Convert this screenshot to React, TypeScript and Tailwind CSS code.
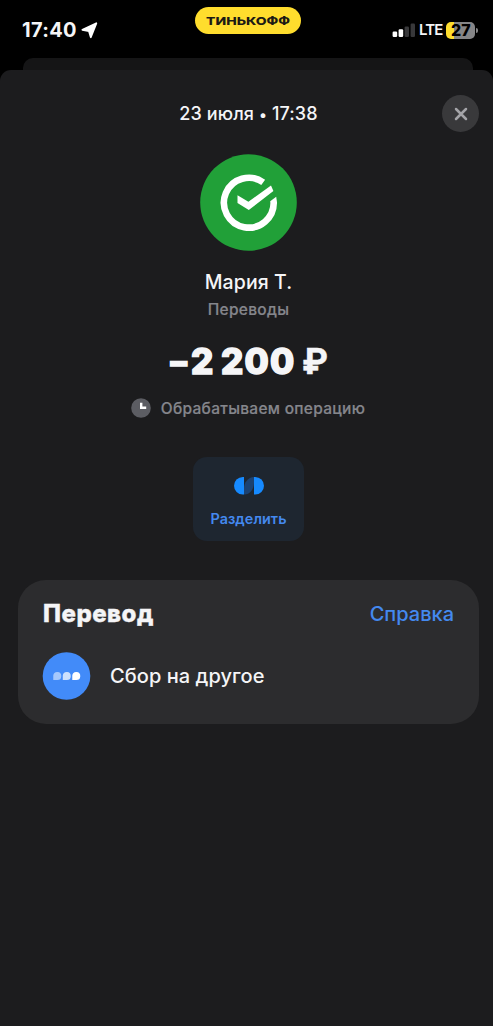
import React from "react";

function StatusBar() {
  return (
    <header className="grid h-[58px] shrink-0 grid-cols-[195px_106px_1fr] items-start">
      <div className="flex h-[60px] items-center pl-[22px]">
        <span className="text-[20px] leading-6 font-bold tracking-[0.3px]">17:40</span>
        <svg className="ml-[4px]" width="17" height="17" viewBox="0 0 17 17" fill="#fff" stroke="#fff" strokeWidth="1.8" strokeLinejoin="round">
          <path d="M15.3 1.3 9.8 15.2 8 9.2 1.4 7.8Z" />
        </svg>
      </div>
      <div className="mt-[7px] flex h-[27px] items-center justify-center rounded-full bg-[#ffdd2d]">
        <svg width="84" height="14" viewBox="0 0 84 14" className="overflow-visible">
          <text x="0" y="10.8" textLength="84" lengthAdjust="spacingAndGlyphs" fontSize="11" fontWeight="800" fill="#1c1a14" fontFamily="Inter, sans-serif">ТИНЬКОФФ</text>
        </svg>
      </div>
      <div className="flex h-[60px] items-center pl-[91px]">
        <svg className="shrink-0" width="24" height="15" viewBox="0 0 24 15">
          <rect x="0.6" y="8.5" width="4.6" height="5.5" rx="1.2" fill="#fff" />
          <rect x="6.6" y="6.3" width="4.6" height="7.7" rx="1.2" fill="#fff" />
          <rect x="12.6" y="3.5" width="4.4" height="10.5" rx="1.2" fill="#38383a" />
          <rect x="18.6" y="0.5" width="4.4" height="13.5" rx="1.2" fill="#38383a" />
        </svg>
        <span className="ml-[3px] text-[15px] leading-5 font-semibold tracking-[-0.9px]">LTE</span>
        <span className="ml-[4px] flex h-[17px] w-[29px] shrink-0 items-center justify-center rounded-[5px] bg-linear-to-r from-[#ffdd2d] from-27% to-[#858587] to-27% text-[16px] font-extrabold text-black">
          27
        </span>
        <span className="ml-px h-[5px] w-[2px] shrink-0 rounded-r bg-[#858587]" />
      </div>
    </header>
  );
}

function BankLogo() {
  return (
    <svg className="mt-[21px] shrink-0" width="97" height="97" viewBox="0 0 97 97">
      <circle cx="48.5" cy="48.5" r="48.3" fill="#21a038" />
      <path d="M63.2 28.4A24.9 24.9 0 1 0 73.7 48" fill="none" stroke="#fff" strokeWidth="6.6" />
      <path d="M70.2 47.2 76.2 42.8 77 48.2H70.4Z" fill="#fff" />
      <path d="M37.5 41.3 48.4 47.8 71 31.4 73.4 37 48.8 56 37.5 48.9Z" fill="#fff" />
    </svg>
  );
}

function SplitButton() {
  return (
    <button className="mt-[36px] flex h-[84px] w-[111px] shrink-0 flex-col items-center rounded-[14px] bg-[#1e2630]">
      <svg className="mt-[20px]" width="30" height="18" viewBox="0 0 30 18">
        <path d="M10 0v17.6H8.8A8.8 8.8 0 0 1 8.8 0Z" fill="#168aff" />
        <path d="M20 0v17.6H21.2A8.8 8.8 0 0 0 21.2 0Z" fill="#168aff" />
        <path d="M10 17.6V11C10 6 14 0 20 0V6C20 12 16 17.6 10 17.6Z" fill="#1c4272" />
      </svg>
      <span className="mt-[14px] text-[14.4px] leading-5 font-semibold tracking-[0.05px] text-[#4489ef]">Разделить</span>
    </button>
  );
}

function TransferCard() {
  return (
    <section className="mt-[39px] h-[144px] w-[461px] shrink-0 rounded-[28px] bg-[#2c2c2e] pt-[19px] pr-[25px] pl-[25px]">
      <div className="flex h-[30px] items-center justify-between">
        <h2 className="text-[24px] leading-[30px] font-extrabold tracking-[0.5px] [-webkit-text-stroke:0.4px_#f5f5f7]">Перевод</h2>
        <a className="text-[20px] leading-[30px] font-medium text-[#4489ef]">Справка</a>
      </div>
      <div className="mt-[23px] -ml-px flex h-[48px] items-center">
        <svg width="49" height="48" viewBox="0 0 49 49">
          <circle cx="24.5" cy="24.5" r="24.3" fill="#428bf9" />
          <path d="M11 28.6V24a4.1 4.1 0 1 1 4.1 4.6Z" fill="#a5c8fc" />
          <path d="M20.7 28.6V24a4.1 4.1 0 1 1 4.1 4.6Z" fill="#cce0fd" />
          <path d="M30.4 28.6V24a4.1 4.1 0 1 1 4.1 4.6Z" fill="#fff" />
        </svg>
        <span className="ml-[19px] text-[20px] leading-7 font-medium tracking-[0.06px]">Сбор на другое</span>
      </div>
    </section>
  );
}

export default function App() {
  return (
    <div className="flex h-[1026px] w-[493px] flex-col overflow-hidden bg-black font-['Inter','Liberation_Sans',sans-serif] whitespace-nowrap text-[#f5f5f7]">
      <StatusBar />
      <div className="mr-[20px] ml-[23px] h-[12px] shrink-0 rounded-t-[10px] bg-[#151516]" />
      <main className="flex grow flex-col items-center rounded-t-[11px] bg-[#1c1c1e] pr-[14px] pl-[18px]">
        <div className="mt-[24px] grid h-[39px] w-full grid-cols-[37px_1fr_37px] items-center">
          <time className="col-start-2 mt-px text-center text-[18px] leading-6 font-medium tracking-[0.1px]">23 июля <span className="text-[15px]">•</span> 17:38</time>
          <button className="flex size-[37px] items-center justify-center rounded-full bg-[#39393b]" aria-label="Закрыть">
            <svg width="14" height="14" viewBox="0 0 14 14" stroke="#a4a4a8" strokeWidth="2.5" strokeLinecap="round">
              <path d="m2 2 10 10M12 2 2 12" />
            </svg>
          </button>
        </div>
        <BankLogo />
        <h1 className="mt-[17px] text-[19.5px] leading-[28px] font-medium tracking-[0.1px]">Мария Т.</h1>
        <p className="mt-[4px] text-[15.5px] leading-[20px] font-medium tracking-[0.3px] text-[#85868c] [-webkit-text-stroke:0.2px_#85868c]">Переводы</p>
        <p className="mt-[21px] h-[40px] text-[35px] leading-[40px] font-extrabold tracking-[1.3px] [word-spacing:-2.5px] [-webkit-text-stroke:1.6px_#f5f5f7] [stroke-linejoin:round]">
          <span className="relative -top-px inline-block text-[32px] leading-none">−</span>2 200 <span className="inline-block font-bold [-webkit-text-stroke:0.4px_#f5f5f7]">₽</span>
        </p>
        <div className="mt-[16px] -ml-px flex h-[24px] items-center">
          <svg className="-mt-[2px]" width="20" height="20" viewBox="0 0 20 20">
            <circle cx="10" cy="10" r="9.8" fill="#5c5d63" />
            <path d="M10.2 4.8v4.9h5" fill="none" stroke="#fff" strokeWidth="2.4" />
          </svg>
          <span className="ml-[10px] text-[15.5px] leading-[24px] font-medium tracking-[0.28px] text-[#85868c] [-webkit-text-stroke:0.2px_#85868c]">Обрабатываем операцию</span>
        </div>
        <SplitButton />
        <TransferCard />
      </main>
    </div>
  );
}
